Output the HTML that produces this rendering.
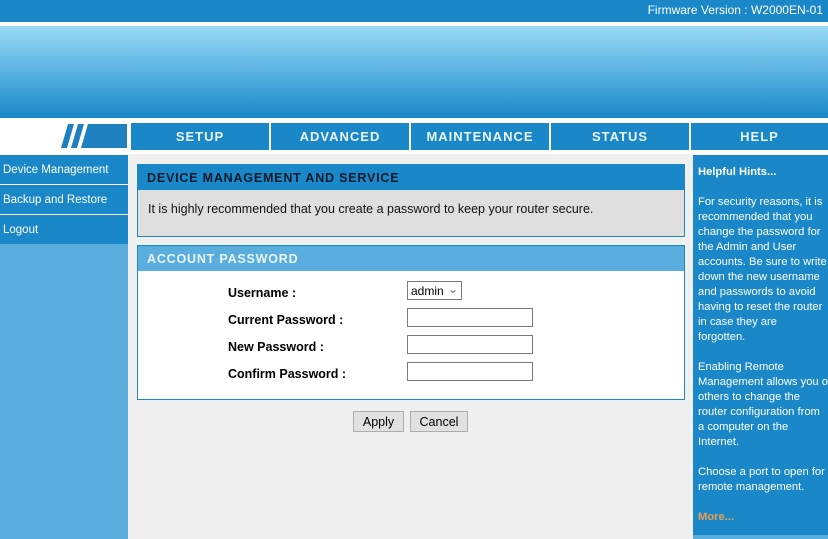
<!DOCTYPE html>
<html><head><meta charset="utf-8"><style>
*{margin:0;padding:0;box-sizing:border-box}
html,body{width:828px;height:539px;overflow:hidden}
body{background:#fff;font-family:"Liberation Sans",Arial,sans-serif;position:relative;font-size:12px}
.a{position:absolute}
.top{left:0;top:0;width:828px;height:22px;background:#1a87c8;color:#fff;font-size:12px;text-align:right;padding:3px 5px 0 0}
.ban{left:0;top:26px;width:828px;height:92px;background:linear-gradient(#9bdaf5,#5fb6e3 45%,#1a87c8)}
.tab{top:123px;height:27px;width:138px;background:#1a87c8;color:#eaf4fb;font-weight:bold;font-size:13px;letter-spacing:1px;text-align:center;line-height:28px}
.side{left:0;width:128px;background:#1a87c8;color:#fff;font-size:11.5px;padding-left:3px;line-height:30px;height:29px}
.lbl{left:228px;font-weight:bold;font-size:12.5px;color:#000}
.inp{left:407px;width:126px;height:19px;border:1px solid #7a7a7a;background:#fff}
.btn{top:411px;height:21px;border:1px solid #adadad;background:#e1e1e1;font-size:12.5px;text-align:center;line-height:20px}
.hint{left:693px;top:155px;width:135px;height:380px;background:#1a87c8;color:#fff;font-size:11.2px;line-height:15px;padding:10px 0 0 5px;white-space:nowrap;overflow:hidden}
</style></head><body>
<div class="a top">Firmware Version : W2000EN-01</div>
<div class="a ban"></div>
<svg class="a" style="left:0;top:122px" width="130" height="30"><polygon fill="#1f80bf" points="68,2 74,2 67,26 61,26"/><polygon fill="#1f80bf" points="78,2 84,2 77,26 71,26"/><polygon fill="#1f80bf" points="88,2 127,2 127,26 81,26"/></svg>
<div class="a tab" style="left:131px">SETUP</div>
<div class="a tab" style="left:271px">ADVANCED</div>
<div class="a tab" style="left:411px">MAINTENANCE</div>
<div class="a tab" style="left:551px">STATUS</div>
<div class="a tab" style="left:691px;width:137px">HELP</div>
<div class="a" style="left:0;top:244px;width:128px;height:295px;background:#5aaedd"></div>
<div class="a side" style="top:155px">Device Management</div>
<div class="a side" style="top:185px">Backup and Restore</div>
<div class="a side" style="top:215px">Logout</div>
<div class="a" style="left:128px;top:154px;width:565px;height:385px;background:#f0f0f0"></div>
<div class="a" style="left:137px;top:164px;width:548px;height:73px;border:1px solid #1a87c8;background:#dfdfdf">
<div style="height:25px;background:#1a87c8;color:#0a1a2a;font-weight:bold;font-size:12.5px;letter-spacing:.8px;padding:6px 0 0 9px">DEVICE MANAGEMENT AND SERVICE</div>
<div style="padding:12px 0 0 10px;font-size:12.5px;color:#111">It is highly recommended that you create a password to keep your router secure.</div></div>
<div class="a" style="left:137px;top:245px;width:548px;height:155px;border:1px solid #1a87c8;background:#fff">
<div style="height:25px;background:#5aaedd;color:#eaf4fb;font-weight:bold;font-size:12.5px;letter-spacing:.8px;padding:6px 0 0 9px">ACCOUNT PASSWORD</div></div>
<div class="a lbl" style="top:286px">Username :</div>
<div class="a lbl" style="top:313px">Current Password :</div>
<div class="a lbl" style="top:340px">New Password :</div>
<div class="a lbl" style="top:367px">Confirm Password :</div>
<div class="a" style="left:407px;top:281px;width:55px;height:19px;border:1px solid #7a7a7a;background:#fff;font-size:12px;padding:2px 0 0 3px">admin<span style="position:absolute;left:40px;top:0;color:#666">&#8964;</span></div>
<div class="a inp" style="top:308px"></div>
<div class="a inp" style="top:335px"></div>
<div class="a inp" style="top:362px"></div>
<div class="a btn" style="left:353px;width:51px">Apply</div>
<div class="a btn" style="left:410px;width:58px">Cancel</div>
<div class="a" style="left:693px;top:535px;width:135px;height:4px;background:#5aaedd"></div>
<div class="a hint"><b>Helpful Hints...</b><br><br>For security reasons, it is<br>recommended that you<br>change the password for<br>the Admin and User<br>accounts. Be sure to write<br>down the new username<br>and passwords to avoid<br>having to reset the router<br>in case they are<br>forgotten.<br><br>Enabling Remote<br>Management allows you or<br>others to change the<br>router configuration from<br>a computer on the<br>Internet.<br><br>Choose a port to open for<br>remote management.<br><br><b style="color:#e8a050">More...</b></div>
</body></html>
